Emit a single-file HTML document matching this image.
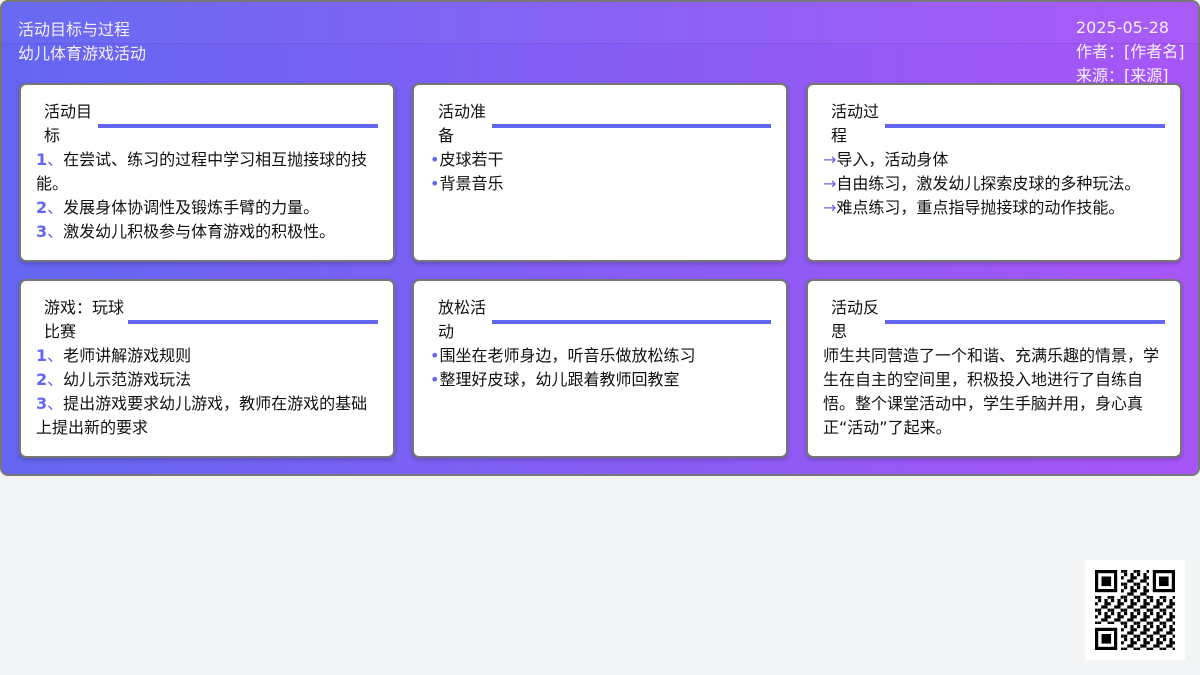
<!DOCTYPE html>
<html><head><meta charset="utf-8"><style>
*{margin:0;padding:0;box-sizing:border-box}
body{width:1200px;height:675px;background:#f3f4f6;font-family:"DejaVu Sans","Noto Sans CJK SC",sans-serif;font-size:16px;line-height:24px;color:#111;position:relative;overflow:hidden}
.wrap{position:absolute;left:0;top:0;width:1200px;height:476px;border:2px solid #777;border-radius:8px;background:linear-gradient(90deg,#6366f1,#a855f7)}
.band{position:absolute;left:0;top:0;right:0;height:42px;border-bottom:1px solid rgba(80,40,160,.2);background:rgba(255,255,255,.03)}
.hl{position:absolute;left:16px;top:16px;color:#f3f0ff;font-size:16px}
.hr{position:absolute;left:1074px;top:14px;color:#f3f0ff;font-size:16px}
.card{position:absolute;width:376px;height:179px;background:#fff;border:2px solid #777;border-radius:7px;box-shadow:0 2px 4px rgba(0,0,0,.2);padding:15px 15px}
.h{display:flex;align-items:center;margin-left:8px}
.h .t{flex:none;line-height:24px;font-size:16px}
.h .l{flex:1;height:4px;background:#6366f1;margin-left:4px;margin-top:4px}
.n{color:#6366f1;font-weight:bold}
.b{color:#6366f1}
</style></head><body>
<div class="wrap"><div class="band"></div>
<div class="hl">活动目标与过程<br>幼儿体育游戏活动</div>
<div class="hr">2025-05-28<br>作者：[作者名]<br>来源：[来源]</div>
</div>
<div class="card" style="left:19px;top:83px"><div class="h"><div class="t" style="width:50px">活动目标</div><div class="l"></div></div>
<div><span class="n">1</span><span class="b">、</span>在尝试、练习的过程中学习相互抛接球的技能。<br><span class="n">2</span><span class="b">、</span>发展身体协调性及锻炼手臂的力量。<br><span class="n">3</span><span class="b">、</span>激发幼儿积极参与体育游戏的积极性。</div></div>
<div class="card" style="left:412px;top:83px;padding-left:16px"><div class="h"><div class="t" style="width:50px">活动准备</div><div class="l"></div></div>
<div><span class="b">•</span>皮球若干<br><span class="b">•</span>背景音乐</div></div>
<div class="card" style="left:806px;top:83px"><div class="h"><div class="t" style="width:50px">活动过程</div><div class="l"></div></div>
<div><span class="b">→</span>导入，活动身体<br><span class="b">→</span>自由练习，激发幼儿探索皮球的多种玩法。<br><span class="b">→</span>难点练习，重点指导抛接球的动作技能。</div></div>
<div class="card" style="left:19px;top:279px"><div class="h"><div class="t" style="width:80px">游戏：玩球比赛</div><div class="l"></div></div>
<div><span class="n">1</span><span class="b">、</span>老师讲解游戏规则<br><span class="n">2</span><span class="b">、</span>幼儿示范游戏玩法<br><span class="n">3</span><span class="b">、</span>提出游戏要求幼儿游戏，教师在游戏的基础上提出新的要求</div></div>
<div class="card" style="left:412px;top:279px;padding-left:16px"><div class="h"><div class="t" style="width:50px">放松活动</div><div class="l"></div></div>
<div><span class="b">•</span>围坐在老师身边，听音乐做放松练习<br><span class="b">•</span>整理好皮球，幼儿跟着教师回教室</div></div>
<div class="card" style="left:806px;top:279px"><div class="h"><div class="t" style="width:50px">活动反思</div><div class="l"></div></div>
<div>师生共同营造了一个和谐、充满乐趣的情景，学<br>生在自主的空间里，积极投入地进行了自练自<br>悟。整个课堂活动中，学生手脑并用，身心真<br>正“活动”了起来。</div></div>
<div style="position:absolute;left:1085px;top:560px;width:100px;height:100px;background:#fff">
<svg width="100" height="100" viewBox="0 0 100 100">
<defs><pattern id="p" width="13" height="13" patternUnits="userSpaceOnUse">
<rect x="0" y="0" width="3.2" height="3.2"/><rect x="6.4" y="0" width="3.2" height="6.4"/><rect x="3.2" y="6.4" width="6.4" height="3.2"/><rect x="9.6" y="3.2" width="3.2" height="3.2"/><rect x="0" y="9.6" width="3.2" height="3.2"/><rect x="9.6" y="9.6" width="3.2" height="3.2"/></pattern></defs>
<rect x="10" y="10" width="80" height="80" fill="url(#p)"/>
<g fill="#fff"><rect x="10" y="10" width="26" height="26"/><rect x="64" y="10" width="26" height="26"/><rect x="10" y="64" width="26" height="26"/></g>
<g fill="none" stroke="#000" stroke-width="3.2"><rect x="11.6" y="11.6" width="19" height="19"/><rect x="69.4" y="11.6" width="19" height="19"/><rect x="11.6" y="69.4" width="19" height="19"/></g>
<g><rect x="16.5" y="16.5" width="9.6" height="9.6"/><rect x="74" y="16.5" width="9.6" height="9.6"/><rect x="16.5" y="74" width="9.6" height="9.6"/></g>
</svg></div>
</body></html>
